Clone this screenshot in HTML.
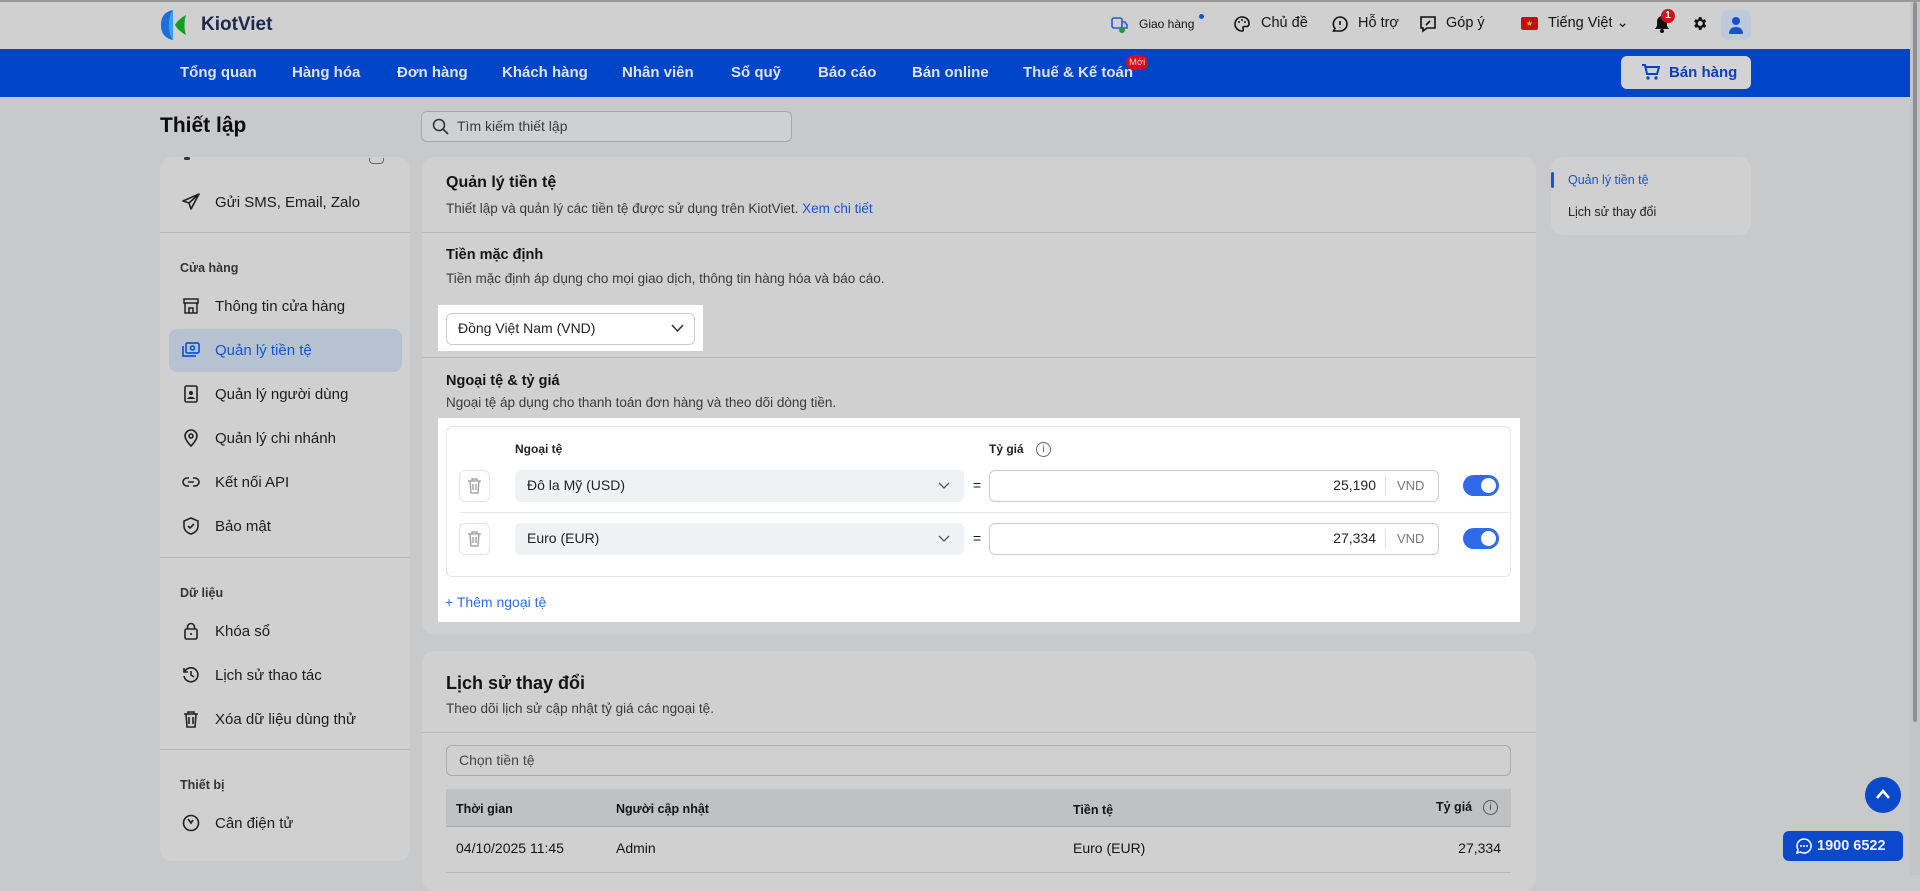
<!DOCTYPE html>
<html><head><meta charset="utf-8">
<style>
*{box-sizing:border-box;margin:0;padding:0}
body{width:1920px;height:875px;overflow:hidden;background:#c8c9cb;font-family:"Liberation Sans",Arial,sans-serif;color:#141414;position:relative}
.a{position:absolute;white-space:nowrap}
.card{position:absolute;background:#d0d0d0;border-radius:12px}
.hd{position:absolute;left:0;top:0;width:1920px;height:49px;background:#d0d0d0;border-top:2px solid #9a9a9a}
.nav{position:absolute;left:0;top:49px;width:1920px;height:48px;background:#0044c8}
.nv{position:absolute;top:64px;color:#dde4f3;font-size:15px;font-weight:bold}
.si{position:absolute;left:215px;font-size:15px;color:#1c1c1c}
.ic{position:absolute;left:182px;width:18px;height:18px}
.sh{position:absolute;left:180px;font-size:12.5px;color:#333;font-weight:bold}
.hr{position:absolute;height:1px;background:#b8b8b8}
.t{font-size:13.5px;color:#3a3a3a}
</style></head><body>
<div class="hd"></div>
<!-- logo -->
<svg class="a" style="left:160px;top:9px" width="34" height="32" viewBox="0 0 34 32"><path d="M13 1 C3 3 1 10 1 16 C1 22 3 29 13 31 C10 26 9 21 9 16 C9 11 10 6 13 1Z" fill="#1a6fd8"/><path d="M9 16 C9 10 11 5 13 1 L13 31 C11 27 9 22 9 16Z" fill="#3aa0e8"/><path d="M26 6 C22 8 17 12 15 16 C17 20 22 24 26 26 C24 20 24 12 26 6Z" fill="#10a020"/></svg>
<div class="a" style="left:201px;top:14px;font-size:19px;font-weight:bold;color:#1b2a4a">KiotViet</div>
<!-- header right -->
<svg class="a" style="left:1110px;top:15px" width="18" height="18" viewBox="0 0 18 18"><rect x="2" y="3" width="10" height="10" rx="2" fill="none" stroke="#2a5bd0" stroke-width="1.6"/><path d="M12 7h3l2 3v3h-5" fill="none" stroke="#2a5bd0" stroke-width="1.6"/><circle cx="12" cy="15" r="3" fill="#1a9a3a"/></svg>
<div class="a" style="left:1139px;top:17px;font-size:12px">Giao hàng</div>
<div class="a" style="left:1199px;top:14px;width:5px;height:5px;border-radius:50%;background:#1a4fd0"></div>
<svg class="a" style="left:1233px;top:15px" width="18" height="18" viewBox="0 0 18 18"><path d="M9 2a7 7 0 1 0 0 14c1.5 0 1.5-1.5 1-2.5s0-2 1.5-2H14a3 3 0 0 0 2-3C16 4.5 13 2 9 2Z" fill="none" stroke="#111" stroke-width="1.6"/><circle cx="6" cy="7" r="1" fill="#111"/><circle cx="9" cy="5" r="1" fill="#111"/><circle cx="12" cy="7" r="1" fill="#111"/></svg>
<div class="a" style="left:1261px;top:15px;font-size:14.5px">Chủ đề</div>
<svg class="a" style="left:1331px;top:15px" width="18" height="18" viewBox="0 0 18 18"><path d="M9 2a7 7 0 0 1 0 14H2.5l1.5-2.5A7 7 0 0 1 9 2Z" fill="none" stroke="#111" stroke-width="1.6"/><path d="M9 6v4M9 12v.5" stroke="#111" stroke-width="1.6"/></svg>
<div class="a" style="left:1358px;top:15px;font-size:14.5px">Hỗ trợ</div>
<svg class="a" style="left:1419px;top:15px" width="18" height="18" viewBox="0 0 18 18"><path d="M2 2h14v11H8l-4 3v-3H2Z" fill="none" stroke="#111" stroke-width="1.6"/><path d="M7 10l4-4" stroke="#111" stroke-width="1.6"/></svg>
<div class="a" style="left:1446px;top:15px;font-size:14.5px">Góp ý</div>
<div class="a" style="left:1521px;top:17px;width:17px;height:13px;background:#c0101a;border-radius:2px;color:#e8d000;font-size:8px;text-align:center;line-height:13px">★</div>
<div class="a" style="left:1548px;top:15px;font-size:14.5px">Tiếng Việt ⌄</div>
<svg class="a" style="left:1654px;top:14px" width="16" height="20" viewBox="0 0 16 20"><path d="M8 2a5 5 0 0 0-5 5v5l-2 3h14l-2-3V7a5 5 0 0 0-5-5Z" fill="#111"/><circle cx="8" cy="17" r="2" fill="#111"/></svg>
<div class="a" style="left:1661px;top:9px;width:14px;height:14px;border-radius:50%;background:#d0101a;color:#fff;font-size:10px;text-align:center;line-height:14px;font-weight:bold">1</div>
<svg class="a" style="left:1691px;top:15px" width="17" height="17" viewBox="0 0 24 24"><path fill="#111" d="M19.4 13a7.5 7.5 0 0 0 0-2l2.1-1.6-2-3.5-2.5 1a7 7 0 0 0-1.7-1L15 3h-4l-.4 2.9a7 7 0 0 0-1.7 1l-2.5-1-2 3.5L6.6 11a7.5 7.5 0 0 0 0 2l-2.1 1.6 2 3.5 2.5-1a7 7 0 0 0 1.7 1L11 21h4l.4-2.9a7 7 0 0 0 1.7-1l2.5 1 2-3.5ZM13 15.5a3.5 3.5 0 1 1 0-7 3.5 3.5 0 0 1 0 7Z"/></svg>
<div class="a" style="left:1721px;top:10px;width:30px;height:30px;border-radius:7px;background:#bccadb"></div>
<svg class="a" style="left:1728px;top:16px" width="16" height="18" viewBox="0 0 16 18"><circle cx="8" cy="5" r="4" fill="#1a4fd0"/><path d="M1 18c0-5 3-7 7-7s7 2 7 7Z" fill="#1a4fd0"/></svg>
<!-- nav -->
<div class="nav"></div>
<div class="nv" style="left:180px">Tổng quan</div>
<div class="nv" style="left:292px">Hàng hóa</div>
<div class="nv" style="left:397px">Đơn hàng</div>
<div class="nv" style="left:502px">Khách hàng</div>
<div class="nv" style="left:622px">Nhân viên</div>
<div class="nv" style="left:731px">Sổ quỹ</div>
<div class="nv" style="left:818px">Báo cáo</div>
<div class="nv" style="left:912px">Bán online</div>
<div class="nv" style="left:1023px">Thuế &amp; Kế toán</div>
<div class="a" style="left:1126px;top:55px;height:15px;padding:0 3px;border-radius:8px;background:#d0101a;color:#f3d0d0;font-size:9.5px;line-height:15px">Mới</div>
<div class="a" style="left:1621px;top:56px;width:130px;height:33px;border-radius:6px;background:#d3d3d5"></div>
<svg class="a" style="left:1641px;top:63px" width="19" height="18" viewBox="0 0 19 18"><path d="M1 2h3l2 9h10l2-7H5" fill="none" stroke="#0044c8" stroke-width="2"/><circle cx="7" cy="15" r="1.6" fill="#0044c8"/><circle cx="15" cy="15" r="1.6" fill="#0044c8"/></svg>
<div class="a" style="left:1669px;top:64px;font-size:15px;font-weight:bold;color:#0a3fb5">Bán hàng</div>
<!-- title + search -->
<div class="a" style="left:160px;top:114px;font-size:21px;font-weight:bold;color:#0c0c0c">Thiết lập</div>
<div class="a" style="left:421px;top:111px;width:371px;height:31px;border:1px solid #a5a7ab;border-radius:6px;background:#cfd0d1"></div>
<svg class="a" style="left:432px;top:118px" width="17" height="17" viewBox="0 0 17 17"><circle cx="7" cy="7" r="5.5" fill="none" stroke="#333" stroke-width="1.6"/><path d="M11 11l5 5" stroke="#333" stroke-width="1.6"/></svg>
<div class="a" style="left:457px;top:118px;font-size:14px;color:#3a3a3a">Tìm kiếm thiết lập</div>
<!-- sidebar -->
<div class="card" style="left:160px;top:157px;width:250px;height:704px"></div>
<div class="a" style="left:184px;top:157px;width:6px;height:3px;background:#333;border-radius:2px"></div>
<div class="a" style="left:369px;top:158px;width:15px;height:6px;border:1.5px solid #666;border-top:none;border-radius:0 0 4px 4px"></div>
<svg class="ic" style="top:193px" viewBox="0 0 18 18"><path d="M17 1L1 8l6 2 2 6Z M7 10l10-9" fill="none" stroke="#222" stroke-width="1.6" stroke-linejoin="round"/></svg>
<div class="si" style="top:194px">Gửi SMS, Email, Zalo</div>
<div class="hr" style="left:160px;top:232px;width:250px"></div>
<div class="sh" style="top:261px">Cửa hàng</div>
<svg class="ic" style="top:297px" viewBox="0 0 18 18"><path d="M2 2h14v4H2Z M3 6v10h12V6 M7 16v-5h4v5" fill="none" stroke="#222" stroke-width="1.5"/></svg>
<div class="si" style="top:298px">Thông tin cửa hàng</div>
<div class="a" style="left:169px;top:329px;width:233px;height:43px;border-radius:8px;background:#b6c2d1"></div>
<svg class="ic" style="top:341px" viewBox="0 0 18 18"><rect x="4" y="2" width="13" height="10" rx="1.5" fill="none" stroke="#1456d0" stroke-width="1.7"/><circle cx="10.5" cy="7" r="2" fill="none" stroke="#1456d0" stroke-width="1.7"/><path d="M1 5v10h13" fill="none" stroke="#1456d0" stroke-width="1.7"/></svg>
<div class="si" style="top:342px;color:#1456d0">Quản lý tiền tệ</div>
<svg class="ic" style="top:385px" viewBox="0 0 18 18"><rect x="3" y="1" width="12" height="16" rx="1.5" fill="none" stroke="#222" stroke-width="1.6"/><circle cx="9" cy="8" r="2" fill="#222"/><path d="M5 14c1-3 7-3 8 0Z" fill="#222"/></svg>
<div class="si" style="top:386px">Quản lý người dùng</div>
<svg class="ic" style="top:429px" viewBox="0 0 18 18"><path d="M9 17s-6-6-6-10a6 6 0 0 1 12 0c0 4-6 10-6 10Z" fill="none" stroke="#222" stroke-width="1.6"/><circle cx="9" cy="7" r="2" fill="none" stroke="#222" stroke-width="1.6"/></svg>
<div class="si" style="top:430px">Quản lý chi nhánh</div>
<svg class="ic" style="top:473px" viewBox="0 0 18 18"><path d="M7 5H5a4 4 0 0 0 0 8h2M11 5h2a4 4 0 0 1 0 8h-2M6 9h6" fill="none" stroke="#222" stroke-width="1.6"/></svg>
<div class="si" style="top:474px">Kết nối API</div>
<svg class="ic" style="top:517px" viewBox="0 0 18 18"><path d="M9 1l7 3v5c0 4-3 7-7 8-4-1-7-4-7-8V4Z" fill="none" stroke="#222" stroke-width="1.6"/><path d="M6 9l2 2 4-4" fill="none" stroke="#222" stroke-width="1.6"/></svg>
<div class="si" style="top:518px">Bảo mật</div>
<div class="hr" style="left:160px;top:557px;width:250px"></div>
<div class="sh" style="top:586px">Dữ liệu</div>
<svg class="ic" style="top:622px" viewBox="0 0 18 18"><rect x="3" y="7" width="12" height="10" rx="1.5" fill="none" stroke="#222" stroke-width="1.6"/><path d="M5.5 7V5a3.5 3.5 0 0 1 7 0v2M9 11v2" fill="none" stroke="#222" stroke-width="1.6"/></svg>
<div class="si" style="top:623px">Khóa sổ</div>
<svg class="ic" style="top:666px" viewBox="0 0 18 18"><path d="M3 5a7 7 0 1 1-1 5M2 2v4h4M9 5v4l3 2" fill="none" stroke="#222" stroke-width="1.6"/></svg>
<div class="si" style="top:667px">Lịch sử thao tác</div>
<svg class="ic" style="top:710px" viewBox="0 0 18 18"><path d="M2 4h14M6 4V2h6v2M4 4l1 13h8l1-13M7 7v7M11 7v7" fill="none" stroke="#222" stroke-width="1.6"/></svg>
<div class="si" style="top:711px">Xóa dữ liệu dùng thử</div>
<div class="hr" style="left:160px;top:749px;width:250px"></div>
<div class="sh" style="top:778px">Thiết bị</div>
<svg class="ic" style="top:814px" viewBox="0 0 18 18"><circle cx="9" cy="9" r="7.5" fill="none" stroke="#222" stroke-width="1.6"/><path d="M6 5l3 4 2-3" fill="none" stroke="#222" stroke-width="1.6"/></svg>
<div class="si" style="top:815px">Cân điện tử</div>
<!-- main card 1 -->
<div class="card" style="left:422px;top:157px;width:1114px;height:477px"></div>
<div class="a" style="left:446px;top:174px;font-size:16px;font-weight:bold">Quản lý tiền tệ</div>
<div class="a t" style="left:446px;top:201px">Thiết lập và quản lý các tiền tệ được sử dụng trên KiotViet. <span style="color:#1456d0">Xem chi tiết</span></div>
<div class="hr" style="left:422px;top:232px;width:1114px"></div>
<div class="a" style="left:446px;top:247px;font-size:14.5px;font-weight:bold">Tiền mặc định</div>
<div class="a t" style="left:446px;top:271px">Tiền mặc định áp dụng cho mọi giao dịch, thông tin hàng hóa và báo cáo.</div>
<div class="a" style="left:438px;top:305px;width:265px;height:46px;background:#fff"></div>
<div class="a" style="left:446px;top:313px;width:249px;height:32px;border:1px solid #c9ccd2;border-radius:6px"></div>
<div class="a" style="left:458px;top:320px;font-size:14px;color:#222">Đồng Việt Nam (VND)</div>
<svg class="a" style="left:671px;top:324px" width="13" height="9" viewBox="0 0 13 9"><path d="M1 1l5.5 6L12 1" fill="none" stroke="#333" stroke-width="1.5"/></svg>
<div class="hr" style="left:422px;top:357px;width:1114px"></div>
<div class="a" style="left:446px;top:373px;font-size:14.5px;font-weight:bold">Ngoại tệ &amp; tỷ giá</div>
<div class="a t" style="left:446px;top:395px">Ngoại tệ áp dụng cho thanh toán đơn hàng và theo dõi dòng tiền.</div>
<div class="a" style="left:438px;top:418px;width:1082px;height:204px;background:#fff"></div>
<div class="a" style="left:446px;top:426px;width:1065px;height:151px;border:1px solid #e2e4e8;border-radius:6px"></div>
<div class="a" style="left:515px;top:442px;font-size:12px;font-weight:bold;color:#222">Ngoại tệ</div>
<div class="a" style="left:989px;top:442px;font-size:12px;font-weight:bold;color:#222">Tỷ giá</div>
<div class="a" style="left:1036px;top:442px;width:15px;height:15px;border:1.3px solid #666;border-radius:50%;font-size:10px;line-height:13px;text-align:center;color:#555">i</div>
<!-- row1 -->
<div class="a" style="left:459px;top:470px;width:31px;height:32px;border:1px solid #e2e4e8;border-radius:6px"></div>
<svg class="a" style="left:467px;top:478px" width="15" height="16" viewBox="0 0 15 16"><path d="M1 3h13M5 3V1h5v2M3 3l1 12h7l1-12M6 6v6M9 6v6" fill="none" stroke="#999" stroke-width="1.3"/></svg>
<div class="a" style="left:515px;top:470px;width:449px;height:32px;background:#f0f1f3;border-radius:6px"></div>
<div class="a" style="left:527px;top:477px;font-size:14px;color:#222">Đô la Mỹ (USD)</div>
<svg class="a" style="left:938px;top:482px" width="12" height="8" viewBox="0 0 12 8"><path d="M1 1l5 5 5-5" fill="none" stroke="#555" stroke-width="1.3"/></svg>
<div class="a" style="left:973px;top:477px;font-size:14px">=</div>
<div class="a" style="left:989px;top:470px;width:450px;height:32px;border:1px solid #c9ccd2;border-radius:6px"></div>
<div class="a" style="left:1300px;top:477px;width:76px;text-align:right;font-size:14px;color:#222">25,190</div>
<div class="a" style="left:1385px;top:476px;width:1px;height:20px;background:#dde"></div>
<div class="a" style="left:1397px;top:478px;font-size:13px;color:#777">VND</div>
<div class="a" style="left:1463px;top:475px;width:36px;height:21px;border-radius:11px;background:#2f6be8"></div>
<div class="a" style="left:1481px;top:478px;width:15px;height:15px;border-radius:50%;background:#fff"></div>
<div class="a" style="left:459px;top:512px;width:1052px;height:1px;background:#e4e6ea"></div>
<!-- row2 -->
<div class="a" style="left:459px;top:523px;width:31px;height:32px;border:1px solid #e2e4e8;border-radius:6px"></div>
<svg class="a" style="left:467px;top:531px" width="15" height="16" viewBox="0 0 15 16"><path d="M1 3h13M5 3V1h5v2M3 3l1 12h7l1-12M6 6v6M9 6v6" fill="none" stroke="#999" stroke-width="1.3"/></svg>
<div class="a" style="left:515px;top:523px;width:449px;height:32px;background:#f0f1f3;border-radius:6px"></div>
<div class="a" style="left:527px;top:530px;font-size:14px;color:#222">Euro (EUR)</div>
<svg class="a" style="left:938px;top:535px" width="12" height="8" viewBox="0 0 12 8"><path d="M1 1l5 5 5-5" fill="none" stroke="#555" stroke-width="1.3"/></svg>
<div class="a" style="left:973px;top:530px;font-size:14px">=</div>
<div class="a" style="left:989px;top:523px;width:450px;height:32px;border:1px solid #c9ccd2;border-radius:6px"></div>
<div class="a" style="left:1300px;top:530px;width:76px;text-align:right;font-size:14px;color:#222">27,334</div>
<div class="a" style="left:1385px;top:529px;width:1px;height:20px;background:#dde"></div>
<div class="a" style="left:1397px;top:531px;font-size:13px;color:#777">VND</div>
<div class="a" style="left:1463px;top:528px;width:36px;height:21px;border-radius:11px;background:#2f6be8"></div>
<div class="a" style="left:1481px;top:531px;width:15px;height:15px;border-radius:50%;background:#fff"></div>
<div class="a" style="left:445px;top:594px;font-size:14px;color:#2a6fe0">+ Thêm ngoại tệ</div>
<!-- right nav -->
<div class="card" style="left:1551px;top:157px;width:200px;height:78px"></div>
<div class="a" style="left:1551px;top:172px;width:3px;height:16px;background:#1456d0;border-radius:2px"></div>
<div class="a" style="left:1568px;top:173px;font-size:12.5px;color:#1456d0">Quản lý tiền tệ</div>
<div class="a" style="left:1568px;top:205px;font-size:12.5px;color:#222">Lịch sử thay đổi</div>
<!-- card 2 -->
<div class="card" style="left:422px;top:651px;width:1114px;height:240px"></div>
<div class="a" style="left:446px;top:673px;font-size:18px;font-weight:bold">Lịch sử thay đổi</div>
<div class="a t" style="left:446px;top:701px">Theo dõi lịch sử cập nhật tỷ giá các ngoại tệ.</div>
<div class="hr" style="left:422px;top:732px;width:1114px"></div>
<div class="a" style="left:446px;top:745px;width:1065px;height:31px;border:1px solid #a8aaae;border-radius:6px"></div>
<div class="a" style="left:459px;top:752px;font-size:14px;color:#444">Chọn tiền tệ</div>
<div class="a" style="left:446px;top:789px;width:1065px;height:38px;background:#c0c1c3;border-bottom:1px solid #a8aaae"></div>
<div class="a" style="left:456px;top:802px;font-size:12.5px;font-weight:bold">Thời gian</div>
<div class="a" style="left:616px;top:802px;font-size:12.5px;font-weight:bold">Người cập nhật</div>
<div class="a" style="left:1073px;top:803px;font-size:12.5px;font-weight:bold">Tiền tệ</div>
<div class="a" style="left:1436px;top:800px;font-size:12.5px;font-weight:bold">Tỷ giá</div>
<div class="a" style="left:1483px;top:800px;width:15px;height:15px;border:1.3px solid #555;border-radius:50%;font-size:10px;line-height:13px;text-align:center;color:#444">i</div>
<div class="a" style="left:456px;top:840px;font-size:14px">04/10/2025 11:45</div>
<div class="a" style="left:616px;top:840px;font-size:14px">Admin</div>
<div class="a" style="left:1073px;top:840px;font-size:14px">Euro (EUR)</div>
<div class="a" style="left:1400px;top:840px;width:101px;text-align:right;font-size:14px">27,334</div>
<div class="a" style="left:446px;top:872px;width:1065px;height:1px;background:#b8b8b8"></div>
<!-- floating -->
<div class="a" style="left:1865px;top:777px;width:36px;height:36px;border-radius:50%;background:#0a49cc"></div>
<svg class="a" style="left:1875px;top:788px" width="16" height="12" viewBox="0 0 16 12"><path d="M2 10l6-7 6 7" fill="none" stroke="#fff" stroke-width="2.6"/></svg>
<div class="a" style="left:1783px;top:831px;width:120px;height:30px;border-radius:6px;background:#0a49cc"></div>
<svg class="a" style="left:1796px;top:838px" width="16" height="16" viewBox="0 0 16 16"><path d="M8 1a7 7 0 1 1-3.5 13L1 15l1-3.5A7 7 0 0 1 8 1Z" fill="none" stroke="#fff" stroke-width="1.6"/><circle cx="5" cy="8" r="1" fill="#fff"/><circle cx="8" cy="8" r="1" fill="#fff"/><circle cx="11" cy="8" r="1" fill="#fff"/></svg>
<div class="a" style="left:1817px;top:838px;font-size:14.5px;font-weight:bold;color:#eef">1900 6522</div>
<!-- scrollbar -->
<div class="a" style="left:1910px;top:2px;width:10px;height:873px;background:#c4c5c7"></div>
<div class="a" style="left:1913px;top:2px;width:4px;height:720px;background:#8e9094;border-radius:2px"></div>
</body></html>
